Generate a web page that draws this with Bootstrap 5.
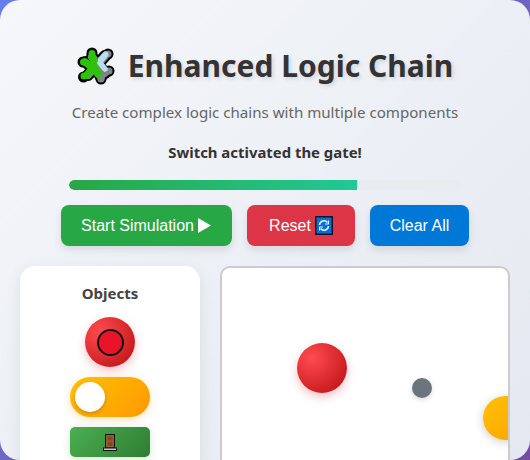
<!DOCTYPE html>
<html lang="en">
<head>
<meta charset="utf-8">
<title>Enhanced Logic Chain</title>
<link href="https://cdn.jsdelivr.net/npm/bootstrap@5.3.0/dist/css/bootstrap.min.css" rel="stylesheet">
<style>
html,body{height:460px;overflow:hidden}
body{background:linear-gradient(135deg,#667eea,#764ba2);font-family:"Noto Sans","Open Sans",sans-serif}
.shell{height:460px;overflow:hidden;border-radius:20px;background:linear-gradient(135deg,#f5f7fa,#e4e8f0);padding:47px 20px 0}
.heading{font-family:"Noto Sans",sans-serif;font-size:30px;line-height:36px;font-weight:700;color:#333;text-shadow:2px 2px 4px rgba(0,0,0,.12);margin:0;gap:13px}
.subtitle{font-size:15.1px;line-height:22px;color:#666;margin:16px 0 0}
.statusline{font-size:14.9px;line-height:20px;font-weight:700;color:#333;margin:19px 0 0}
.meter{width:392px;height:10px;margin:18px auto 0;border-radius:5px;background:#e9ecef}
.meter .progress-bar{width:288px;background:linear-gradient(90deg,#28a745,#20c997);border-radius:5px 0 0 5px}
.actions{gap:15px;margin-top:15px}
.action{font-family:"Liberation Sans",sans-serif;font-size:16px;line-height:18px;color:#fff;border:0;border-radius:8px;height:41px;padding:0;white-space:nowrap;box-shadow:0 4px 8px rgba(0,0,0,.1);display:flex;align-items:center;gap:4px}
.action:hover{color:#fff}
.go{background:#28a745;width:171px}
.undo{background:#dc3545;width:108px}
.wipe{background:#0078d7;width:99px}
.workspace{gap:20px;margin-top:20px}
.palette{width:180px;height:300px;flex:none;background:#fff;border:0;border-radius:15px;box-shadow:0 4px 16px rgba(0,0,0,.08);padding:17px 0 0}
.palette-title{font-size:15px;line-height:20px;font-weight:700;color:#444;margin:0 0 14px}
.redball{width:50px;height:50px;border-radius:50%;background:radial-gradient(circle at 30% 30%,#ff4b50,#b80d10);box-shadow:0 4px 10px rgba(220,53,69,.3)}
.redcore{width:27px;height:27px;border-radius:50%;background:#ea1428;border:2px solid #111}
.toggle{width:80px;height:40px;border-radius:20px;background:linear-gradient(135deg,#ffc107,#ff9800);box-shadow:0 2px 8px rgba(255,152,0,.3);margin-top:10px;padding:5px}
.knob{width:30px;height:30px;border-radius:50%;background:#fff;box-shadow:0 2px 4px rgba(0,0,0,.2)}
.doorbox{width:80px;height:30px;border-radius:5px;background:linear-gradient(135deg,#4caf50,#2e7d32);box-shadow:0 2px 8px rgba(76,175,80,.25);margin-top:10px}
.stage{position:relative;width:290px;height:300px;flex:none;background:#fff;border:2px solid #ccc;border-radius:10px;overflow:hidden}
.node{position:absolute}
.node-ball{left:75px;top:75px;width:50px;height:50px;border-radius:50%;background:radial-gradient(circle at 30% 30%,#ff4b50,#b80d10);box-shadow:0 4px 10px rgba(220,53,69,.3)}
.node-dot{left:190px;top:110px;width:20px;height:20px;border-radius:50%;background:#6c757d;box-shadow:0 2px 5px rgba(0,0,0,.15)}
.node-switch{left:261px;top:128px;width:80px;height:44px;border-radius:22px;background:linear-gradient(135deg,#ffc107,#ff9800);box-shadow:0 2px 10px rgba(0,0,0,.2)}
</style>
</head>
<body>
<div class="shell">
  <h1 class="heading d-flex justify-content-center align-items-center">
    <svg width="38" height="38" viewBox="0 0 38 38" aria-hidden="true">
      <g fill="none" stroke-linecap="round">
        <g stroke="#000" stroke-width="12">
          <path d="M11 28 28 9M15 10 28 26M9 15 17 22M24 30 20 23"/>
        </g>
        <g fill="#000"><circle cx="6.500" cy="30" r="5.500"/><circle cx="6" cy="15" r="5.500"/><circle cx="15" cy="6" r="5.500"/><circle cx="31" cy="7" r="5.500"/><circle cx="32" cy="24" r="5.500"/><circle cx="24" cy="32" r="5.500"/></g>
        <g stroke="#7f8489" stroke-width="8">
          <path d="M11 28 28 9M15 10 28 26M24 30 20 23"/>
        </g>
        <g fill="#7f8489"><circle cx="31" cy="7" r="3.500"/><circle cx="32" cy="24" r="3.500"/><circle cx="24" cy="32" r="3.500"/></g>
        <g stroke="#2ec20e" stroke-width="7.500">
          <path d="M10 28 18 18M15 10 19 15M8 15 16 21M21 27 18 22"/>
        </g>
        <g fill="#2ec20e"><circle cx="7" cy="29" r="3.500"/><circle cx="6.500" cy="15" r="3.500"/><circle cx="15" cy="6.500" r="3.500"/></g>
        <path d="M24 13 28.500 7.500" stroke="#b9dcf0" stroke-width="6"/>
        <path d="M23 16 28 22" stroke="#b9dcf0" stroke-width="5.500"/>
      </g>
    </svg>
    <span>Enhanced Logic Chain</span>
  </h1>
  <p class="subtitle text-center">Create complex logic chains with multiple components</p>
  <p class="statusline text-center">Switch activated the gate!</p>
  <div class="progress meter"><div class="progress-bar"></div></div>
  <div class="actions d-flex justify-content-center">
    <button type="button" class="btn action go justify-content-center">Start Simulation <svg width="14" height="15" viewBox="0 0 14 15" aria-hidden="true"><path d="M0 0 13 7.500 0 15Z" fill="#fff"/></svg></button>
    <button type="button" class="btn action undo justify-content-center">Reset <svg width="18" height="19" viewBox="0 0 18 19" aria-hidden="true"><rect x=".75" y=".75" width="16.500" height="17.500" fill="#0a6fd0" stroke="#12122a" stroke-width="1.500"/><path d="M4.500 9A4.500 4.500 0 0 1 12.500 6.500M13.500 10A4.500 4.500 0 0 1 5.500 12.500" fill="none" stroke="#e8f4ff" stroke-width="1.500"/><path d="M13.500 4.500V8H10M4.500 14.500V11H8" fill="none" stroke="#e8f4ff"/></svg></button>
    <button type="button" class="btn action wipe justify-content-center">Clear All</button>
  </div>
  <div class="workspace d-flex">
    <div class="card palette align-items-center">
      <h2 class="palette-title">Objects</h2>
      <div class="redball d-flex align-items-center justify-content-center"><div class="redcore"></div></div>
      <div class="toggle"><div class="knob"></div></div>
      <div class="doorbox d-flex align-items-center justify-content-center">
        <svg width="14" height="17" viewBox="0 0 14 17" aria-hidden="true"><rect x="2.500" y=".5" width="9" height="13.500" fill="#9a5d33" stroke="#111"/><rect x="4.500" y="2.500" width="5" height="4" fill="#7d4826"/><rect x="4.500" y="8" width="5" height="4" fill="#7d4826"/><rect x=".5" y="14" width="13" height="2.500" fill="#c8c8c8" stroke="#111"/></svg>
      </div>
    </div>
    <div class="stage">
      <div class="node node-ball"></div>
      <div class="node node-dot"></div>
      <div class="node node-switch"></div>
    </div>
  </div>
</div>
<script src="https://cdn.jsdelivr.net/npm/bootstrap@5.3.0/dist/js/bootstrap.bundle.min.js"></script>
</body>
</html>
